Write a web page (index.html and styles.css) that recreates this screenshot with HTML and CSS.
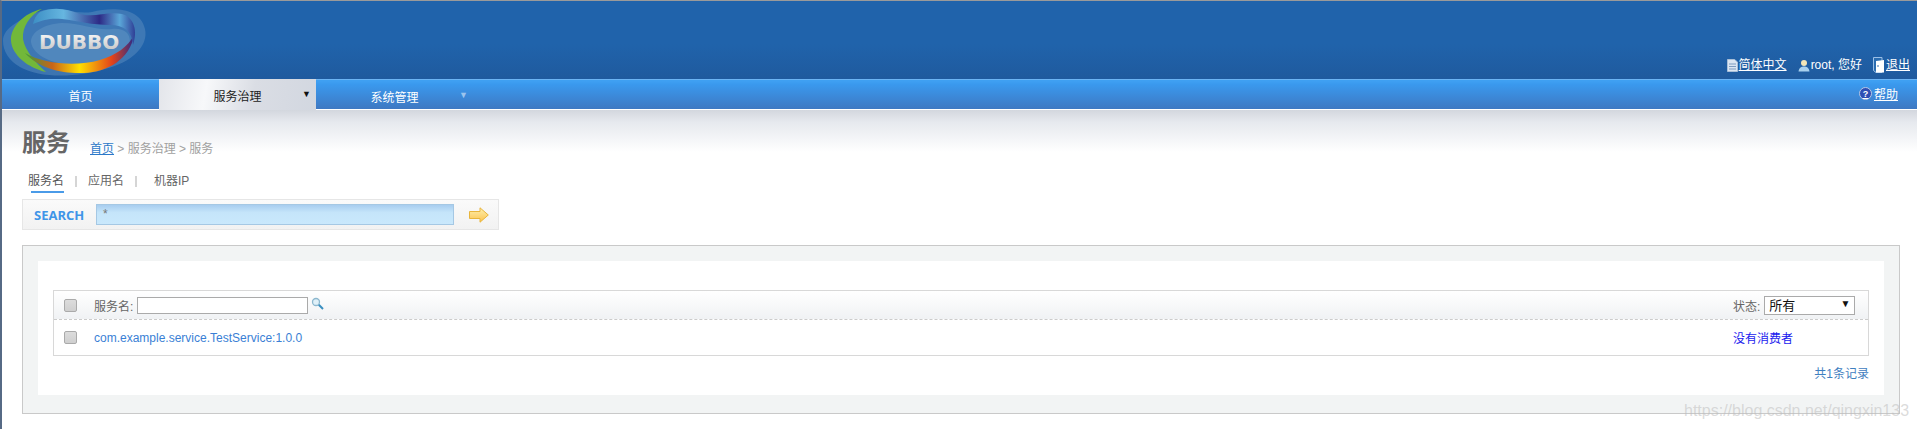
FILE: index.html
```html
<!DOCTYPE html>
<html lang="zh-CN">
<head>
  <meta charset="UTF-8">
  <title>Dubbo Admin</title>
  <link rel="stylesheet" href="styles.css">
</head>
<body>

  <div class="cabecera">
    <svg class="logo" width="150" height="78" viewBox="0 0 150 78">
      <defs>
        <linearGradient id="bandaAbajo" x1="0" y1="0" x2="1" y2="0">
          <stop offset="0" stop-color="#3f9a3c"/>
          <stop offset="0.25" stop-color="#c8641a"/>
          <stop offset="0.5" stop-color="#ffdf00"/>
          <stop offset="0.8" stop-color="#e2421a"/>
          <stop offset="1" stop-color="#2b2a88"/>
        </linearGradient>
        <linearGradient id="bandaArriba" x1="0" y1="0" x2="1" y2="0">
          <stop offset="0" stop-color="#3d8fc4"/>
          <stop offset="0.3" stop-color="#66b6e0"/>
          <stop offset="0.65" stop-color="#2d2a86"/>
          <stop offset="0.85" stop-color="#5aa6d8"/>
          <stop offset="1" stop-color="#2f3f96"/>
        </linearGradient>
        <linearGradient id="letras" x1="0" y1="0" x2="0" y2="1">
          <stop offset="0" stop-color="#ffffff"/>
          <stop offset="1" stop-color="#bdbdbd"/>
        </linearGradient>
      </defs>
      <path d="M3 40C3 26 22 18 38 11C58 3 72 14 92 11C112 6 140 6 145 28C149 46 130 62 105 68C80 76 40 78 20 66C9 60 3 50 3 40Z" fill="#5b8dbf" opacity="0.5"/>
      <path d="M31 41C31 31 44 23 62 22C82 22 96 30 112 28C124 27 130 32 130 41C128 52 112 60 84 64C58 66 33 56 31 41Z" fill="#5087bd"/>
      <path d="M42 8C24 12 10 26 11 40C12 54 28 67 46 71C36 62 25 50 23 38C22 26 30 14 42 8Z" fill="#72b83a"/>
      <path d="M25 52C38 67 62 73 84 72C108 71 130 58 134 34C128 46 116 54 100 59C76 66 44 63 25 52Z" fill="url(#bandaAbajo)"/>
      <path d="M40 11C54 5 68 8 80 13C94 17 108 10 122 13C134 16 138 30 133 44C132 30 124 24 110 24C92 24 78 20 62 18C52 17 44 18 33 23C34 18 36 14 40 11Z" fill="url(#bandaArriba)"/>
      <text x="39" y="48" class="logo-texto" fill="url(#letras)">DUBBO</text>
    </svg>
    <div class="cabecera-enlaces">
      <a class="enlace-blanco" href="#">
        <svg width="11" height="13" viewBox="0 0 11 13"><path d="M.5.500H7.500L10.500 3V12.500H.5Z" fill="#dce6f2" stroke="#a9bfd8"/><path d="M2 5H9M2 7.500H9M2 10H9" stroke="#7f9cc0"/></svg>简体中文</a>
      <span class="usuario">
        <svg width="12" height="13" viewBox="0 0 12 13"><circle cx="6" cy="4" r="3" fill="#f3e6b8"/><path d="M.5 12.500C1 8.500 3.500 7.500 6 7.500S11 8.500 11.500 12.500Z" fill="#a8d0ee"/></svg>root, 您好</span>
      <a class="enlace-blanco" href="#">
        <svg width="12" height="16" viewBox="0 0 12 16"><path d="M.5.500H9V15.500H3L.5 13.500Z" fill="#2a6cb0" stroke="#9cc0e6"/><path d="M3 4L11 3V15.500H3Z" fill="#fff"/><circle cx="5" cy="9" r=".8" fill="#1f62a9"/></svg>退出</a>
    </div>
  </div>

  <div class="menu">
    <a class="menu-item" href="#">首页</a>
    <a class="menu-item activo" href="#">服务治理<span class="flecha">▼</span></a>
    <a class="menu-item bajo" href="#">系统管理<span class="flecha tenue">▼</span></a>
    <a class="ayuda" href="#"><span class="ayuda-icono">?</span><span class="ayuda-texto">帮助</span></a>
  </div>

  <div class="contenido">
    <div class="titulo-linea">
      <h1>服务</h1>
      <p class="migas"><a href="#">首页</a> &gt; 服务治理 &gt; 服务</p>
    </div>

    <div class="pestanas">
      <span class="pestana actual">服务名</span>
      <span class="sep"></span>
      <span class="pestana">应用名</span>
      <span class="sep"></span>
      <span class="pestana ultima">机器IP</span>
    </div>

    <div class="buscador">
      <span class="buscador-label">SEARCH</span>
      <div class="buscador-campo">*</div>
      <svg class="buscador-ir" width="20" height="16" viewBox="0 0 20 16">
        <defs>
          <linearGradient id="oro" x1="0" y1="0" x2="0" y2="1">
            <stop offset="0" stop-color="#fdf0b0"/>
            <stop offset="1" stop-color="#fcc34d"/>
          </linearGradient>
        </defs>
        <path d="M.5 4.500H11V.8L19.300 8L11 15.200V11.500H.5Z" fill="url(#oro)" stroke="#e8b53c"/>
      </svg>
    </div>

    <div class="panel">
      <div class="panel-blanco">
        <div class="tabla">
          <div class="fila fila-cabeza">
            <span class="casilla"></span>
            <span class="col-nombre">服务名:
              <span class="campo"></span>
              <svg class="lupa" width="13" height="13" viewBox="0 0 13 13"><circle cx="5" cy="5" r="3.500" fill="#dff0f8" stroke="#8db8cf" stroke-width="1.300"/><path d="M7.800 7.800L12 12" stroke="#3a8fc0" stroke-width="2"/></svg>
            </span>
            <span class="col-estado">状态:
              <span class="selector">所有<span class="selector-flecha">▼</span></span>
            </span>
          </div>
          <div class="fila fila-dato">
            <span class="casilla"></span>
            <span class="col-nombre"><a class="enlace-servicio" href="#">com.example.service.TestService:1.0.0</a></span>
            <span class="col-estado"><a class="sin-consumidor" href="#">没有消费者</a></span>
          </div>
        </div>
        <p class="total">共1条记录</p>
      </div>
    </div>
  </div>

  <div class="marca-agua">https://blog.csdn.net/qingxin133</div>

</body>
</html>
```

FILE: styles.css
```css
* {
  box-sizing: border-box;
}

html, body {
  height: 100%;
}

body {
  margin: 0;
  height: 429px;
  overflow: hidden;
  position: relative;
  background-color: #fff;
  border-top: 1px solid #9a9a9a;
  border-left: 2px solid #566a85;
  font-family: "Liberation Sans", "Noto Sans CJK SC", sans-serif;
  font-size: 12px;
  color: #666;
}

a {
  color: inherit;
}

/* cabecera */
.cabecera {
  height: 78px;
  display: flex;
  justify-content: space-between;
  background: linear-gradient(#2063ab 0, #2063ab 55%, #1f5a9e 100%);
}

.logo {
  display: block;
  margin-left: -2px;
}

.logo-texto {
  font-family: "DejaVu Sans", sans-serif;
  font-weight: bold;
  font-size: 20px;
}

.cabecera-enlaces {
  display: flex;
  align-items: flex-end;
  gap: 11px;
  padding: 0 7px 6px 0;
  color: #fff;
}

.enlace-blanco, .usuario {
  display: flex;
  align-items: center;
  gap: 1px;
  line-height: 15px;
}

/* menu */
.menu {
  height: 31px;
  display: flex;
  align-items: stretch;
  background: linear-gradient(#3fa0f2 0, #3fa0f2 4%, #3a99ee 15%, #3e78c2 100%);
  border-top: 1px solid #6cb4f4;
  border-bottom: 1px solid #fff;
  color: #fff;
}

.menu-item {
  width: 157px;
  padding-top: 2px;
  display: flex;
  align-items: center;
  justify-content: center;
  position: relative;
  text-decoration: none;
  font-size: 12px;
}

.menu-item.bajo {
  padding-top: 4px;
}

.menu-item.activo {
  margin-top: -1px;
  margin-bottom: -1px;
  background: linear-gradient(100deg, #e3e5ea 0, #f7f8fa 30%, #dadde4 60%, #d2d7e0 100%);
  color: #222;
}

.flecha {
  position: absolute;
  left: 143px;
  top: 11px;
  font-size: 9px;
  line-height: 9px;
  color: #111;
}

.flecha.tenue {
  color: #9cc4ee;
}

.ayuda {
  margin-left: auto;
  padding: 0 19px 2px 0;
  display: flex;
  align-items: center;
  gap: 2px;
  color: #fff;
}

.ayuda-icono {
  width: 13px;
  height: 13px;
  border-radius: 50%;
  background-color: #2f4fb4;
  border: 1px solid #b9c8e4;
  display: flex;
  align-items: center;
  justify-content: center;
  font-size: 9px;
  font-weight: bold;
}

.ayuda-texto {
  text-decoration: underline;
}

/* contenido */
.contenido {
  height: 319px;
  padding: 0 17px 0 20px;
  background: linear-gradient(#d3d7de 0, #e6e9ee 12px, #f5f6f8 30px, #fff 42px);
}

.titulo-linea {
  display: flex;
  align-items: flex-end;
  padding-top: 19px;
}

h1 {
  margin: 0;
  width: 68px;
  font-size: 24px;
  line-height: 28px;
  font-weight: bold;
  color: #666;
}

.migas {
  margin: 0;
  font-size: 12px;
  line-height: 14px;
  padding-bottom: 1px;
  color: #a0a0a0;
}

.migas a {
  color: #2b78c8;
}

.pestanas {
  display: flex;
  align-items: center;
  margin-top: 14px;
  padding-left: 6px;
  height: 20px;
}

.pestana {
  position: relative;
  color: #666;
  line-height: 14px;
}

.pestana.actual {
  color: #555;
}

.pestana.actual::after {
  content: "";
  position: absolute;
  left: 3px;
  right: 0;
  bottom: -5px;
  height: 2px;
  background-color: #4a9be8;
}

.pestana.ultima {
  margin-left: 6px;
}

.sep {
  width: 2px;
  height: 11px;
  margin: 0 11px;
  background-color: #d5d5d5;
}

.buscador {
  width: 477px;
  height: 31px;
  margin-top: 8px;
  display: flex;
  align-items: center;
  border: 1px solid #e6e6e6;
  background: linear-gradient(#fafafa, #f2f2f2);
}

.buscador-label {
  width: 73px;
  padding-left: 11px;
  font-family: "Open Sans", sans-serif;
  font-size: 13px;
  font-weight: bold;
  color: #3f95e8;
}

.buscador-campo {
  width: 358px;
  height: 21px;
  padding: 2px 0 0 6px;
  background: linear-gradient(#a8cdef, #c5e5fa 40%, #c9e8fc);
  border: 1px solid #a5c8e4;
  color: #777;
  line-height: 14px;
}

.buscador-ir {
  margin-left: 15px;
}

.panel {
  height: 169px;
  margin-top: 15px;
  padding: 15px;
  border: 1px solid #c9c9c9;
  background-color: #f2f4f4;
}

.panel-blanco {
  height: 134px;
  padding: 29px 15px 0;
  background-color: #fff;
}

.tabla {
  border: 1px solid #d8d8d8;
}

.fila {
  display: flex;
  align-items: center;
  padding-left: 10px;
}

.fila-cabeza {
  height: 29px;
  border-bottom: 1px dashed #ccc;
  background: linear-gradient(#fff, #f0f2f4);
}

.fila-dato {
  height: 35px;
}

.casilla {
  width: 13px;
  height: 13px;
  flex: none;
  border: 1px solid #aaa;
  border-radius: 2px;
  background: linear-gradient(#dcdcdc, #cfcfcf);
}

.col-nombre {
  margin-left: 17px;
  display: flex;
  align-items: center;
  gap: 4px;
}

.campo {
  width: 171px;
  height: 17px;
  border: 1px solid #aaa;
  background-color: #fff;
}

.lupa {
  margin: -3px 0 0 -1px;
}

.col-estado {
  width: 135px;
  margin-left: auto;
  display: flex;
  align-items: center;
  gap: 4px;
}

.selector {
  width: 91px;
  height: 19px;
  padding-left: 4px;
  border: 1px solid #aaa;
  background-color: #fff;
  color: #111;
  font-size: 13px;
  line-height: 18px;
  position: relative;
}

.selector-flecha {
  position: absolute;
  right: 4px;
  top: 0;
  font-size: 10px;
  line-height: 14px;
}

.enlace-servicio {
  color: #3a7fd5;
  text-decoration: none;
}

.sin-consumidor {
  color: #1a1aee;
  text-decoration: none;
}

.total {
  margin: 11px 0 0;
  text-align: right;
  color: #3f80c0;
  line-height: 14px;
}

.marca-agua {
  position: absolute;
  left: 1682px;
  top: 400px;
  font-family: "Liberation Sans", sans-serif;
  font-size: 16px;
  line-height: 20px;
  color: rgba(190, 190, 190, 0.55);
}
```
